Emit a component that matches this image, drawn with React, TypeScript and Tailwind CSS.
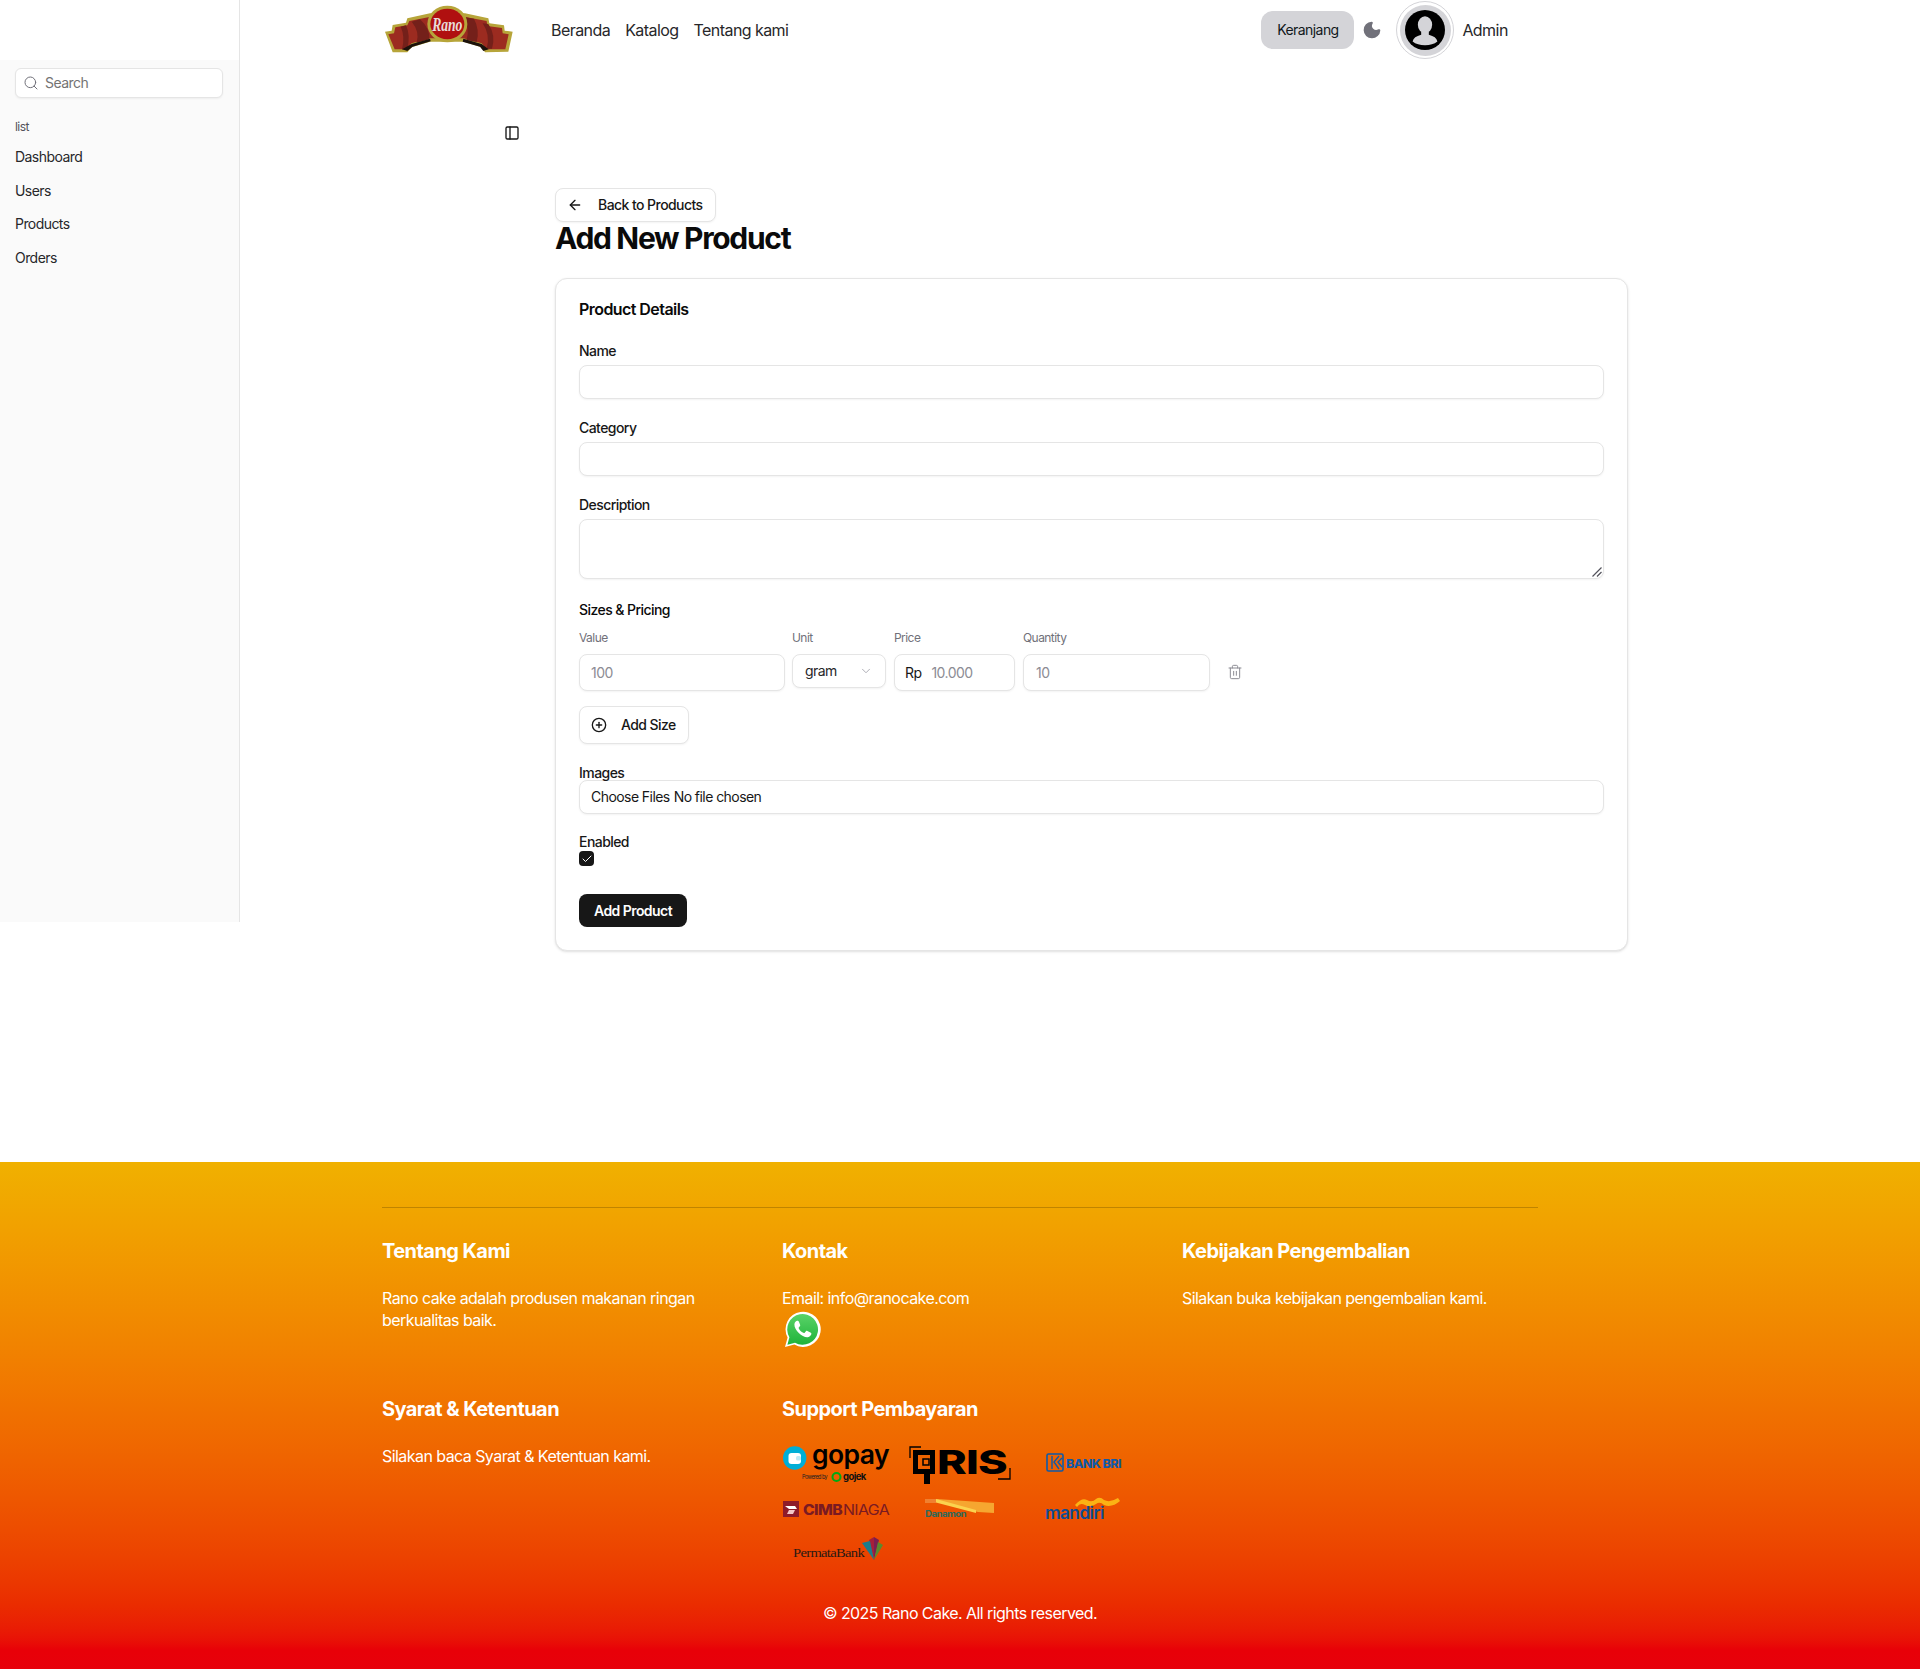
import React from 'react';
import { ArrowLeft, Check, ChevronDown, CirclePlus, Moon, PanelLeft, Search, Trash2 } from 'lucide-react';

const font = { fontFamily: 'Inter, sans-serif' };

const RanoLogo = () => (
  <svg width="130" height="50" viewBox="42 15 390 150" className="shrink-0">
    {/* gold outline */}
    <path d="M45 95 L65 92 L68 75 L108 68 L112 55 L180 40 L285 40 L355 55 L358 70 L402 76 L404 92 L428 95 L415 155 L345 157 L335 142 L280 125 L180 125 L125 142 L112 157 L68 157 Z" fill="#b7a53a" />
    {/* ribbon */}
    <path d="M55 103 L72 100 L76 82 L112 76 L118 63 L182 50 L282 50 L350 63 L352 78 L396 84 L398 100 L416 103 L406 148 L350 148 L335 130 L280 115 L180 115 L125 130 L108 148 L74 148 Z" fill="#9c2b20" />
    <path d="M108 76 Q122 105 112 146 L96 148 Q106 110 92 80 Z" fill="#74201a" />
    <path d="M150 58 Q180 85 178 118 L140 128 Q150 95 125 65 Z" fill="#74201a" />
    <path d="M355 72 Q378 105 366 146 L350 146 Q362 105 338 70 Z" fill="#74201a" />
    <path d="M278 50 Q300 80 290 120 L320 126 Q330 90 312 56 Z" fill="#74201a" />
    <path d="M96 148 L125 132 L180 116 L182 124 L128 140 L112 153 Z" fill="#1c120c" />
    <path d="M280 116 L335 132 L356 148 L340 153 L330 140 L278 125 Z" fill="#1c120c" />
    {/* badge */}
    <ellipse cx="232" cy="72" rx="60" ry="55" fill="#b7a53a" />
    <ellipse cx="232" cy="72" rx="51" ry="46" fill="#b01010" />
    <text x="232" y="92" textAnchor="middle" fontSize="58" fontStyle="italic" fontWeight="700" fill="#e8dcd8" fontFamily="Liberation Serif, serif" textLength="90" lengthAdjust="spacingAndGlyphs">Rano</text>
  </svg>
);

const AvatarIcon = () => (
  <div className="flex h-[58px] w-[58px] items-center justify-center rounded-full border border-[#d4d4d8] bg-white">
    <div className="flex h-[51px] w-[51px] items-center justify-center rounded-full bg-[#d4d4d8]">
      <svg width="40" height="40" viewBox="0 0 42 42">
        <circle cx="21" cy="21" r="21" fill="#000" />
        <ellipse cx="21" cy="15.5" rx="7.5" ry="9" fill="#d4d4d8" />
        <path d="M17 23 L25 23 L25 26 Q33 28 34 33 Q29 37 21 37 Q13 37 8 33 Q9 28 17 26 Z" fill="#d4d4d8" />
      </svg>
    </div>
  </div>
);

const WhatsAppIcon = () => (
  <svg width="37" height="37" viewBox="0 0 37 37" className="ml-[2px] mt-[2px]">
    <defs>
      <linearGradient id="wa" x1="0" y1="0" x2="0" y2="1">
        <stop offset="0" stopColor="#5ad368" />
        <stop offset="1" stopColor="#1fb33a" />
      </linearGradient>
    </defs>
    <path d="M1 36 L3.6 26.6 A17.6 17.6 0 1 1 10.4 33.6 Z" fill="#fff" />
    <path d="M3.4 33.7 L5.4 26.3 A15.4 15.4 0 1 1 11 31.8 Z" fill="url(#wa)" />
    <path d="M13.2 9.8 C12.2 9.8 10.6 11 10.4 13.2 C10.2 16 12.2 19.4 14.8 22 C17.6 24.8 21.2 26.6 23.8 26.2 C25.8 25.8 27.4 24.2 27.4 22.8 C27.4 22 27 21.8 26.4 21.4 L23.4 19.9 C22.7 19.6 22.3 19.7 21.9 20.2 L20.7 21.7 C20.3 22.1 20 22.1 19.4 21.8 C17.2 20.8 15.6 19 14.8 17.4 C14.5 16.8 14.7 16.5 15 16.2 L16 14.9 C16.3 14.5 16.3 14.2 16.1 13.7 L14.8 10.6 C14.5 10 14.2 9.8 13.2 9.8 Z" fill="#fff" />
  </svg>
);

const GopayLogo = () => (
  <svg width="108" height="48" viewBox="0 -8 108 48" className="-mt-[8px]">
    <circle cx="12.7" cy="13" r="11.7" fill="#00aed6" />
    <rect x="6.5" y="8" width="12.5" height="11" rx="3" fill="#fff" />
    <rect x="14" y="11" width="5" height="4.5" rx="1.5" fill="#bfe9f4" />
    <text x="30" y="19" fontSize="26" fontWeight="600" fill="#000" fontFamily="Inter, sans-serif" textLength="77" lengthAdjust="spacingAndGlyphs">gopay</text>
    <text x="20" y="34" fontSize="5.5" fill="#222" fontFamily="Inter, sans-serif">Powered by</text>
    <circle cx="54.5" cy="32" r="4" fill="none" stroke="#00aa13" strokeWidth="2" />
    <text x="61" y="35" fontSize="9.5" fontWeight="700" fill="#111" fontFamily="Inter, sans-serif">gojek</text>
  </svg>
);

const QrisLogo = () => (
  <svg width="108" height="44" viewBox="0 -4 108 44" className="-mt-[4px]">
    <path d="M4 13 V2 H15" fill="none" stroke="#000" strokeWidth="1.3" />
    <path d="M104 23 V34 H92" fill="none" stroke="#000" strokeWidth="1.3" />
    <path d="M7 5 H29 V29 H24 V39 H18 V29 H7 Z M12 10 V24 H24 V10 Z" fill="#000" fillRule="evenodd" />
    <rect x="17" y="14" width="6" height="6" fill="none" stroke="#000" strokeWidth="1.5" />
    <text x="31" y="29" fontSize="33" fontWeight="800" fill="#000" fontFamily="Inter, sans-serif" textLength="70" lengthAdjust="spacingAndGlyphs">RIS</text>
  </svg>
);

const BriLogo = () => (
  <svg width="108" height="40" viewBox="0 0 108 40">
    <rect x="17" y="9" width="16" height="17" rx="1.5" fill="none" stroke="#0f5aa8" strokeWidth="1.6" />
    <path d="M22 11 V24 M29 11 L24 17 L29 24 M32 13 L28 17 L32 22" fill="none" stroke="#0f5aa8" strokeWidth="1.4" />
    <text x="36" y="23" fontSize="12" fontWeight="800" fill="#0f5aa8" fontFamily="Inter, sans-serif" textLength="55" lengthAdjust="spacingAndGlyphs">BANK BRI</text>
  </svg>
);

const CimbLogo = () => (
  <svg width="108" height="40" viewBox="0 0 108 40">
    <rect x="1" y="12" width="16" height="16" fill="#8e1b2a" />
    <path d="M3 17 H13 L15 20 H7 Z" fill="#fff" />
    <path d="M7 21 H13 L11 25 H5 Z" fill="#f3c9c9" />
    <text x="21" y="26" fontSize="14" fontWeight="800" fill="#7a1a22" fontFamily="Inter, sans-serif" textLength="39" lengthAdjust="spacingAndGlyphs">CIMB</text>
    <text x="61" y="26" fontSize="14" fontWeight="400" fill="#7a1a22" fontFamily="Inter, sans-serif" textLength="46" lengthAdjust="spacingAndGlyphs">NIAGA</text>
  </svg>
);

const DanamonLogo = () => (
  <svg width="108" height="40" viewBox="0 0 108 40">
    <path d="M19 10 H31 L88 14 V24 L72 23 Z" fill="#f6a630" />
    <path d="M30 10 L70 21 V24 L28 13 Z" fill="#fbd24e" />
    <path d="M19 10 H30 V14 H19 Z" fill="#f08030" />
    <text x="19" y="28" fontSize="9" fontWeight="700" fill="#2d6a5a" fontFamily="Inter, sans-serif" textLength="41" lengthAdjust="spacingAndGlyphs">Danamon</text>
  </svg>
);

const MandiriLogo = () => (
  <svg width="108" height="40" viewBox="0 0 108 40">
    <path d="M45 16 Q52 8 57 11 Q62 14 66 10 Q70 7 74 11 Q80 14 88 9 L90 12 Q82 19 74 16 Q70 12 66 15 Q60 19 55 16 Q50 13 47 18 Z" fill="#fbb314" />
    <text x="15" y="30" fontSize="17" fontWeight="600" fill="#0d4c92" fontFamily="Inter, sans-serif" textLength="59" lengthAdjust="spacingAndGlyphs">mandiri</text>
  </svg>
);

const PermataLogo = () => (
  <svg width="108" height="40" viewBox="0 0 108 40">
    <text x="11" y="24" fontSize="12" fill="#2a1a14" fontFamily="Liberation Serif, serif" textLength="71" lengthAdjust="spacingAndGlyphs">PermataBank</text>
    <path d="M87 7 L92 4 L92 27 Z" fill="#a61e3a" />
    <path d="M80 10 L88 8 L92 27 Z" fill="#1c7c8c" />
    <path d="M92 4 L97 7 L92 27 Z" fill="#7a1f50" />
    <path d="M96 9 L101 12 L92 27 Z" fill="#5b8a2d" />
  </svg>
);

const navItems = ['Dashboard', 'Users', 'Products', 'Orders'];
const inputClass = 'w-full rounded-lg border border-[#e5e5e5] bg-white shadow-xs outline-none text-sm placeholder:text-[#8c8c94]';

const Field = ({ label, children, className }: { label: string; children: React.ReactNode; className?: string }) => (
  <div className={className}>
    <label className="block text-sm leading-[20px] font-medium text-[#171717]">{label}</label>
    {children}
  </div>
);

const SizeColumn = ({ label, className, children }: { label: string; className: string; children: React.ReactNode }) => (
  <div className={className}>
    <div className="mb-[8px] h-[16px] text-xs leading-[16px] text-[#71717a]">{label}</div>
    {children}
  </div>
);

export default function App() {
  return (
    <div className="min-h-[1669px] bg-white tracking-[-0.035em] text-[#0a0a0a]" style={font}>
      <div className="flex h-[1162px] items-start">
        {/* Sidebar */}
        <aside className="h-[922px] w-[240px] shrink-0 border-r border-[#e5e5e5]">
          <div className="h-[60px]" />
          <div className="h-[862px] bg-[#fafafa] px-[15px] pt-[8px]">
            <div className="flex h-[30px] w-[208px] items-center gap-[6px] rounded-md border border-[#e5e5e5] bg-white pl-[7px] shadow-xs">
              <Search className="h-4 w-4 text-[#71717a]" strokeWidth={1.5} />
              <span className="text-sm text-[#737373]">Search</span>
            </div>
            <div className="mt-[21px] text-xs leading-[16px] text-[#52525b]">list</div>
            <ul className="mt-[5px]">
              {navItems.map(item => (
                <li key={item} className="flex h-[33.7px] items-center text-sm text-[#27272a]">{item}</li>
              ))}
            </ul>
          </div>
        </aside>

        <div className="min-w-0 flex-1">
          {/* Header */}
          <header className="flex h-[60px] items-center pl-[144px]">
            <RanoLogo />
            <nav className="ml-[37px] flex items-center gap-[15px] text-base text-[#27272a]">
              <span>Beranda</span>
              <span>Katalog</span>
              <span>Tentang kami</span>
            </nav>
            <div className="ml-[473px] flex items-center">
              <button className="h-[38px] w-[93px] rounded-xl bg-[#d4d4d8] text-sm text-[#11181c]">Keranjang</button>
              <Moon className="ml-[8px] h-[20px] w-[20px] fill-[#71717a] text-[#71717a]" />
              <div className="ml-[14px]"><AvatarIcon /></div>
              <span className="ml-[8px] text-base text-[#27272a]">Admin</span>
            </div>
          </header>

          <div className="pl-[264px] pt-[65px]">
            <PanelLeft className="h-[16px] w-[16px] text-[#171717]" />
          </div>

          {/* Form area */}
          <main className="ml-[315px] w-[1073px] pt-[47px]">
            <button className="flex h-[34px] w-[161px] items-center gap-[15px] rounded-lg border border-[#e5e5e5] bg-white pl-[11px] text-sm font-medium text-[#171717] shadow-xs">
              <ArrowLeft className="h-4 w-4" />
              Back to Products
            </button>
            <h1 className="text-3xl leading-[33px] font-bold tracking-[-0.044em] text-[#0a0a0a]">Add New Product</h1>

            <section className="mt-[23px] h-[673px] rounded-xl border border-[#e5e5e5] bg-white px-[23px] pt-[20px] shadow-sm">
              <h2 className="text-base leading-[20px] font-semibold">Product Details</h2>

              <Field label="Name" className="mt-[22px]">
                <input className={`${inputClass} mt-[4px] h-[34px]`} />
              </Field>
              <Field label="Category" className="mt-[19px]">
                <input className={`${inputClass} mt-[4px] h-[34px]`} />
              </Field>
              <Field label="Description" className="mt-[19px]">
                <div className="relative mt-[4px]">
                  <textarea className={`${inputClass} block h-[60px] resize-none`} />
                  <svg width="10" height="10" viewBox="0 0 10 10" className="absolute right-[2px] bottom-[2px] text-[#52525b]">
                    <path d="M0.5 9.5 L9.5 0.5 M5 9.5 L9.5 5" fill="none" stroke="currentColor" strokeWidth="1.2" />
                  </svg>
                </div>
              </Field>

              <div className="mt-[21px] text-sm leading-[20px] font-medium">Sizes &amp; Pricing</div>
              <div className="mt-[10px] flex items-start">
                <SizeColumn label="Value" className="w-[206px]">
                  <input placeholder="100" className={`${inputClass} h-[37px] px-[11px]`} />
                </SizeColumn>
                <SizeColumn label="Unit" className="ml-[7px] w-[94px]">
                  <div className="mt-[2px] flex h-[34px] items-center justify-between rounded-lg border border-[#e5e5e5] bg-white px-[12px] text-sm text-[#27272a] shadow-xs">
                    gram
                    <ChevronDown className="h-[14px] w-[14px] text-[#a1a1aa]" strokeWidth={1.5} />
                  </div>
                </SizeColumn>
                <SizeColumn label="Price" className="ml-[8px] w-[121px]">
                  <div className="flex h-[37px] items-center gap-[10px] rounded-lg border border-[#e5e5e5] bg-white px-[10px] text-sm shadow-xs">
                    <span className="text-[#171717]">Rp</span>
                    <span className="text-[#8c8c94]">10.000</span>
                  </div>
                </SizeColumn>
                <SizeColumn label="Quantity" className="ml-[8px] w-[187px]">
                  <input placeholder="10" className={`${inputClass} h-[37px] px-[12px]`} />
                </SizeColumn>
                <Trash2 className="ml-[17px] mt-[34px] h-[16px] w-[16px] text-[#8c8c94]" strokeWidth={1.5} />
              </div>

              <button className="mt-[15px] flex h-[38px] w-[110px] items-center gap-[14px] rounded-lg border border-[#e5e5e5] bg-white pl-[11px] text-sm font-medium text-[#171717] shadow-xs">
                <CirclePlus className="h-4 w-4" />
                Add Size
              </button>

              <Field label="Images" className="mt-[19px]">
                <input type="file" multiple className={`${inputClass} -mt-[3px] block h-[34px] px-[11px] py-[6px] text-[#171717]`} />
              </Field>

              <Field label="Enabled" className="mt-[18px]">
                <div className="-mt-[1px] flex h-[15px] w-[15px] items-center justify-center rounded-[4px] bg-[#171717]">
                  <Check className="h-[12px] w-[12px] text-white" strokeWidth={2} />
                </div>
              </Field>

              <button className="mt-[28px] h-[33px] w-[108px] rounded-lg bg-[#171717] text-sm font-semibold text-white">Add Product</button>
            </section>
          </main>
        </div>
      </div>

      {/* Footer */}
      <footer className="h-[507px] bg-gradient-to-b from-yellow-500 to-red-600 px-[382px] pt-[45px] text-white">
        <div className="h-px w-[1156px] bg-black/20" />
        <div className="mt-[29px] grid grid-cols-[400px_400px_356px]">
          <div className="h-[158px]">
            <h3 className="text-xl leading-[28px] font-bold">Tentang Kami</h3>
            <p className="mt-[22px] w-[340px] text-base leading-[22px]">Rano cake adalah produsen makanan ringan berkualitas baik.</p>
          </div>
          <div className="h-[158px]">
            <h3 className="text-xl leading-[28px] font-bold">Kontak</h3>
            <p className="mt-[22px] text-base leading-[22px]">Email: info@ranocake.com</p>
            <WhatsAppIcon />
          </div>
          <div className="h-[158px]">
            <h3 className="text-xl leading-[28px] font-bold">Kebijakan Pengembalian</h3>
            <p className="mt-[22px] text-base leading-[22px]">Silakan buka kebijakan pengembalian kami.</p>
          </div>
          <div>
            <h3 className="text-xl leading-[28px] font-bold">Syarat &amp; Ketentuan</h3>
            <p className="mt-[22px] text-base leading-[22px]">Silakan baca Syarat &amp; Ketentuan kami.</p>
          </div>
          <div>
            <h3 className="text-xl leading-[28px] font-bold">Support Pembayaran</h3>
            <div className="mt-[22px] grid w-[356px] grid-cols-3 gap-x-[16px] gap-y-[4px]">
              <GopayLogo />
              <QrisLogo />
              <BriLogo />
              <CimbLogo />
              <DanamonLogo />
              <MandiriLogo />
              <PermataLogo />
            </div>
          </div>
        </div>
        <p className="mt-[28px] w-[1156px] text-center text-base leading-[24px]">© 2025 Rano Cake. All rights reserved.</p>
      </footer>
    </div>
  );
}
